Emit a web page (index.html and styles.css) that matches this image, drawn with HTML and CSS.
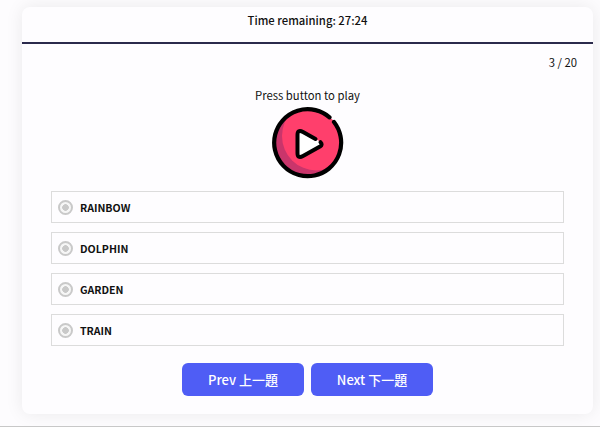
FILE: index.html
```html
<!DOCTYPE html>
<html lang="zh">
<head>
<meta charset="utf-8">
<title>Quiz</title>
<link rel="stylesheet" href="styles.css">
</head>
<body>
<main class="card">
  <header class="timer">Time remaining: 27:24</header>
  <div class="counter">3 / 20</div>
  <section class="player">
    <p class="prompt">Press button to play</p>
    <svg class="play" viewBox="0 0 72 72" width="72" height="72" aria-label="Play">
      <defs><clipPath id="disc"><circle cx="36" cy="36" r="33.500"/></clipPath></defs>
      <circle cx="36" cy="36" r="33.500" fill="#c9356b"/>
      <circle cx="44.500" cy="29" r="34.500" fill="#ff3f6c" clip-path="url(#disc)"/>
      <path d="M57.500 10.300 A33.500 33.500 0 1 0 62 15" fill="none" stroke="#000" stroke-width="4.200" stroke-linecap="round"/>
      <path d="M25.500 28 Q25.500 22 31 25 L48 34.500 Q51 37 48 39.500 L31 49 Q25.500 52 25.500 46 Z" fill="#fff"/>
      <path d="M43.500 32 L31 25 Q25.500 22 25.500 28 L25.500 46 Q25.500 52 31 49 L48 39.500 Q51 37.500 48.500 35.200" fill="none" stroke="#000" stroke-width="4" stroke-linecap="round" stroke-linejoin="round"/>
    </svg>
  </section>
  <ul class="options">
    <li class="option"><span class="radio"></span>RAINBOW</li>
    <li class="option"><span class="radio"></span>DOLPHIN</li>
    <li class="option"><span class="radio"></span>GARDEN</li>
    <li class="option"><span class="radio"></span>TRAIN</li>
  </ul>
  <nav class="actions">
    <button class="btn" type="button">Prev 上一題</button>
    <button class="btn" type="button">Next 下一題</button>
  </nav>
</main>
</body>
</html>
```
FILE: styles.css
```css
* { box-sizing: border-box; }
html, body { margin: 0; height: 427px; overflow: hidden; }
body {
  padding: 7px 7px 0 22px;
  background: #fdfcfe;
  border-bottom: 1px solid #c8c8c8;
  font-family: "Noto Sans CJK SC", "Noto Sans", sans-serif;
  color: #111;
}
.card {
  height: 407px;
  background: #fefdff;
  border-radius: 8px;
  box-shadow: 0 0 18px rgba(0, 0, 0, 0.08);
  display: flex;
  flex-direction: column;
}
.timer {
  height: 37px;
  border-bottom: 2px solid #2b2a4c;
  padding-top: 4px;
  text-align: center;
  font-size: 11.300px;
  line-height: 18px;
  font-weight: 500;
}
.counter {
  margin-top: 9px;
  padding-right: 16px;
  text-align: right;
  font-size: 11.300px;
  line-height: 18px;
}
.player {
  margin-top: 15px;
  display: flex;
  flex-direction: column;
  align-items: center;
}
.prompt {
  margin: 0;
  font-size: 11.300px;
  line-height: 18px;
}
.play { margin-top: 3px; display: block; }
.options {
  list-style: none;
  margin: 12px 29px 0;
  padding: 0;
  display: flex;
  flex-direction: column;
  gap: 9px;
}
.option {
  height: 32px;
  border: 1px solid #dcdcdc;
  display: flex;
  align-items: center;
  gap: 7px;
  padding-left: 6px;
  font-size: 10.600px;
  font-weight: 700;
}
.radio {
  width: 15px;
  height: 15px;
  margin-top: 1px;
  border-radius: 50%;
  border: 2px solid #c9c9c9;
  background: radial-gradient(circle, #c9c9c9 0 3px, #f6f6f6 3.600px);
}
.actions {
  margin-top: 17px;
  display: flex;
  justify-content: center;
  gap: 7px;
}
.btn {
  width: 122px;
  height: 33px;
  border: 0;
  border-radius: 6px;
  background: #4f5df5;
  color: #fff;
  font-family: inherit;
  font-size: 13px;
  font-weight: 500;
}
```
